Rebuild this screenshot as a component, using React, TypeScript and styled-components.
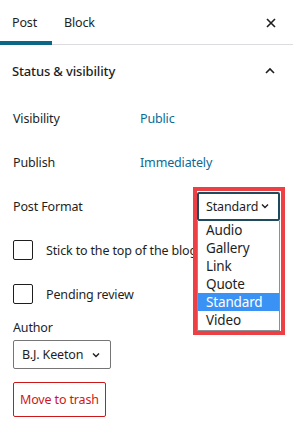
import { createGlobalStyle, styled } from 'styled-components';

const GlobalStyle = createGlobalStyle`
  * { box-sizing: border-box; }
  body {
    margin: 0;
    background: #fff;
    font-family: 'Noto Sans', 'Open Sans', sans-serif;
    color: #1e1e1e;
    letter-spacing: -0.15px;
  }
`;

const FORMATS = ['Audio', 'Gallery', 'Link', 'Quote', 'Standard', 'Video'];

function Chevron() {
  return (
    <svg width="10" height="10" viewBox="0 0 10 10">
      <path d="M2 3.5 L5 6.5 L8 3.5" fill="none" stroke="#1e1e1e" strokeWidth="1.4" />
    </svg>
  );
}

function App() {
  return (
    <>
      <GlobalStyle />
      <Panel>
        <Tabs>
          <Tab $active>Post</Tab>
          <Tab>Block</Tab>
          <CloseButton aria-label="Close">
            <svg width="12" height="12" viewBox="0 0 12 12">
              <path d="M2 2 L10 10 M10 2 L2 10" stroke="#1e1e1e" strokeWidth="1.6" />
            </svg>
          </CloseButton>
        </Tabs>

        <SectionTitle>
          <span>Status &amp; visibility</span>
          <svg width="12" height="12" viewBox="0 0 12 12">
            <path d="M2 8 L6 4 L10 8" fill="none" stroke="#1e1e1e" strokeWidth="1.6" />
          </svg>
        </SectionTitle>

        <Row>
          <Label>Visibility</Label>
          <Value>Public</Value>
        </Row>
        <Row>
          <Label>Publish</Label>
          <Value>Immediately</Value>
        </Row>
        <Row $spread>
          <Label>Post Format</Label>
          <Picker>
            <Frame />
            <FormatSelect>
              Standard
              <Chevron />
            </FormatSelect>
            <Options>
              {FORMATS.map(f => (
                <Option key={f} $selected={f === 'Standard'}>
                  {f}
                </Option>
              ))}
            </Options>
          </Picker>
        </Row>
        <Row>
          <Checkbox />
          <CheckLabel>Stick to the top of the blog</CheckLabel>
        </Row>
        <Row>
          <Checkbox />
          <CheckLabel>Pending review</CheckLabel>
        </Row>

        <AuthorBlock>
          <Label>Author</Label>
          <AuthorSelect>
            B.J. Keeton
            <Chevron />
          </AuthorSelect>
          <TrashButton>Move to trash</TrashButton>
        </AuthorBlock>
      </Panel>
    </>
  );
}

export default App;

const Panel = styled.div`
  width: 293px;
  height: 430px;
  overflow: hidden;
  font-size: 12.5px;
`;

const Tabs = styled.div`
  height: 45px;
  display: flex;
  align-items: stretch;
  border-bottom: 1px solid #dcdcde;
  padding-right: 16px;
`;

const Tab = styled.div<{ $active?: boolean }>`
  width: ${p => (p.$active ? '52px' : '56px')};
  display: flex;
  align-items: center;
  padding-left: 12px;
  margin-bottom: -1px;
  border-bottom: 4px solid ${p => (p.$active ? '#0b6787' : 'transparent')};
  padding-top: 4px;
`;

const CloseButton = styled.div`
  margin-left: auto;
  display: flex;
  align-items: center;
  padding-top: 2px;
`;

const SectionTitle = styled.div`
  height: 51px;
  display: flex;
  align-items: center;
  justify-content: space-between;
  padding: 0 17px 0 12px;
  font-size: 13px;
  font-weight: 500;
`;

const Row = styled.div<{ $spread?: boolean }>`
  height: 44px;
  display: flex;
  align-items: center;
  justify-content: ${p => (p.$spread ? 'space-between' : 'flex-start')};
  padding: 0 13px;
  white-space: nowrap;
`;

const Label = styled.div`
  width: 127px;
`;

const Value = styled.div`
  color: #0a6a94;
`;

const Picker = styled.div`
  position: relative;
  width: 83px;
  height: 29px;
`;

const Frame = styled.div`
  position: absolute;
  top: -5px;
  left: -4px;
  width: 92px;
  height: 148px;
  border: 4px solid #ec4044;
  background: #fff;
`;

const FormatSelect = styled.div`
  position: relative;
  height: 29px;
  display: flex;
  align-items: center;
  justify-content: space-between;
  padding: 0 8px 0 7px;
  border: 2px solid #1d4a5c;
  border-radius: 2px;
  background: #fff;
  font-size: 12.5px;
`;

const Options = styled.div`
  position: absolute;
  top: 29px;
  left: 0;
  width: 83px;
  border: 1px solid #8c8f94;
  border-top: none;
  background: #fff;
  padding-bottom: 1px;
`;

const Option = styled.div<{ $selected?: boolean }>`
  height: 18px;
  line-height: 18px;
  padding-left: 8px;
  font-size: 13.5px;
  color: ${p => (p.$selected ? '#fff' : '#1e1e1e')};
  background: ${p => (p.$selected ? '#3a92f5' : 'transparent')};
`;

const Checkbox = styled.div`
  width: 20px;
  height: 20px;
  border: 1.5px solid #1e1e1e;
  border-radius: 2px;
  flex-shrink: 0;
`;

const CheckLabel = styled.div`
  margin-left: 13px;
`;

const AuthorBlock = styled.div`
  display: flex;
  flex-direction: column;
  align-items: flex-start;
  padding: 3px 13px 0;
`;

const AuthorSelect = styled.div`
  margin-top: 4px;
  width: 98px;
  height: 29px;
  display: flex;
  align-items: center;
  justify-content: space-between;
  padding: 0 9px 0 8px;
  border: 1px solid #757575;
  border-radius: 2px;
`;

const TrashButton = styled.div`
  margin-top: 13px;
  height: 35px;
  display: flex;
  align-items: center;
  padding: 0 6px;
  border: 1px solid #cc1818;
  border-radius: 2px;
  color: #cc1818;
`;
